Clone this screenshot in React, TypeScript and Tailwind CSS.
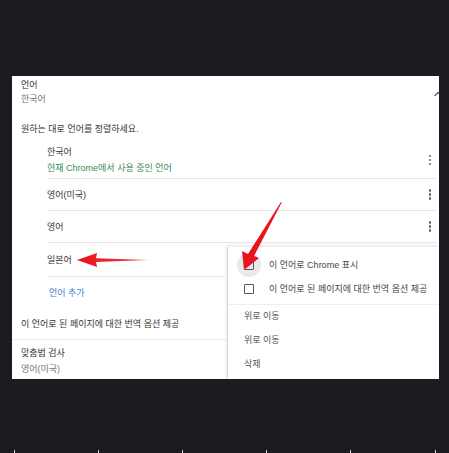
import React from "react";

const Kebab = () => (
  <div className="flex flex-col gap-[1.5px] items-center mr-[6px]">
    <span className="w-[2.5px] h-[2.5px] rounded-full bg-[#5f6368]" />
    <span className="w-[2.5px] h-[2.5px] rounded-full bg-[#5f6368]" />
    <span className="w-[2.5px] h-[2.5px] rounded-full bg-[#5f6368]" />
  </div>
);

const LangRow = ({ name, border = true, dots = true }: { name: string; border?: boolean; dots?: boolean }) => (
  <div className={`h-[32px] flex items-center justify-between ${border ? "border-b border-[#e6e6e6]" : ""}`}>
    <span className="text-[#333]">{name}</span>
    {dots && <Kebab />}
  </div>
);

const Checkbox = () => <span className="w-[10px] h-[10px] border-[1.5px] border-[#555] rounded-[1px] shrink-0" />;

const App = () => {
  return (
    <div
      className="w-[449px] h-[453px] bg-[#1c1b20] relative overflow-hidden text-[9px] leading-[16px]"
      style={{ fontFamily: "'Liberation Sans', 'Noto Sans CJK KR', sans-serif" }}
    >
      <div className="pt-[76px] pl-[12px]">
        <div className="w-[427px] h-[303px] bg-white relative overflow-hidden">
          {/* header */}
          <div className="pt-[2px] pl-[9px] flex justify-between">
            <div className="leading-[14px]">
              <div className="text-[#333]">언어</div>
              <div className="text-[#777]">한국어</div>
            </div>
            <svg width="10" height="8" viewBox="0 0 10 8" className="mt-[12px] -mr-[4px]">
              <path d="M1.5 6 L5 2.5 L8.5 6" stroke="#666" strokeWidth="1.4" fill="none" />
            </svg>
          </div>
          <div className="mt-[16px] pl-[9px] leading-[14px] text-[#333]">원하는 대로 언어를 정렬하세요.</div>

          <div className="ml-[35px] mr-[2px] mt-[8px]">
            <div className="flex items-center justify-between border-b border-[#e6e6e6] pb-[2px]">
              <div>
                <div className="text-[#333]">한국어</div>
                <div className="text-[#3a8a57]">현재 Chrome에서 사용 중인 언어</div>
              </div>
              <Kebab />
            </div>
            <LangRow name="영어(미국)" />
            <LangRow name="영어" />
            <div className="h-[34px] flex items-center border-b border-[#e6e6e6] w-[178px]">
              <span className="text-[#333]">일본어</span>
            </div>
            <div className="h-[31px] flex items-center pl-[2px] text-[#4a7fd6]">언어 추가</div>
          </div>

          <div className="h-[32px] flex items-center pl-[9px] border-b border-[#ececec] text-[#333]">
            이 언어로 된 페이지에 대한 번역 옵션 제공
          </div>
          <div className="pt-[5px] pl-[9px]">
            <div className="text-[#333]">맞춤법 검사</div>
            <div className="text-[#777]">영어(미국)</div>
          </div>

          {/* popup menu */}
          <div className="absolute left-[215px] top-[171px] right-0 bottom-0 bg-white border-l border-[#d6d6d6] shadow-[0_-1px_4px_rgba(0,0,0,0.12)]">
            <div className="h-[24px] mt-[6px] flex items-center">
              <div className="w-[24px] h-[24px] rounded-full bg-[#e9e9e9] flex items-center justify-center ml-[9px]">
                <Checkbox />
              </div>
              <span className="ml-[8px] text-[#444]">이 언어로 Chrome 표시</span>
            </div>
            <div className="h-[24px] flex items-center pl-[16px]">
              <Checkbox />
              <span className="ml-[15px] text-[#444]">이 언어로 된 페이지에 대한 번역 옵션 제공</span>
            </div>
            <div className="mt-[3px] border-t border-[#eeeeee]" />
            <div className="pl-[16px] text-[#555]">
              <div className="h-[24px] mt-[-1px] flex items-center">위로 이동</div>
              <div className="h-[24px] flex items-center">위로 이동</div>
              <div className="h-[24px] flex items-center">삭제</div>
            </div>
          </div>
        </div>
      </div>

      {/* bottom ticks */}
      <div className="absolute left-0 right-0 bottom-0 h-[3px]">
        {[14, 98, 182, 266, 350, 435].map((x) => (
          <span key={x} className="absolute bottom-0 w-[1px] h-[3px] bg-[#d8d8d8]" style={{ left: x }} />
        ))}
      </div>

      {/* red annotation arrows */}
      <svg className="absolute inset-0 pointer-events-none" width="449" height="453" viewBox="0 0 449 453">
        <defs>
          <linearGradient id="ra" x1="0" y1="0" x2="1" y2="0">
            <stop offset="0" stopColor="#e8101a" />
            <stop offset="1" stopColor="#f04048" />
          </linearGradient>
        </defs>
        <polygon points="282,202 254,256 259,258 244,270 242,251 248,254 281,202" fill="#e8141e" />
        <polygon points="148,260 96,258.3 97,253 77,260 97,267 96,262" fill="url(#ra)" />
      </svg>
    </div>
  );
};

export default App;
